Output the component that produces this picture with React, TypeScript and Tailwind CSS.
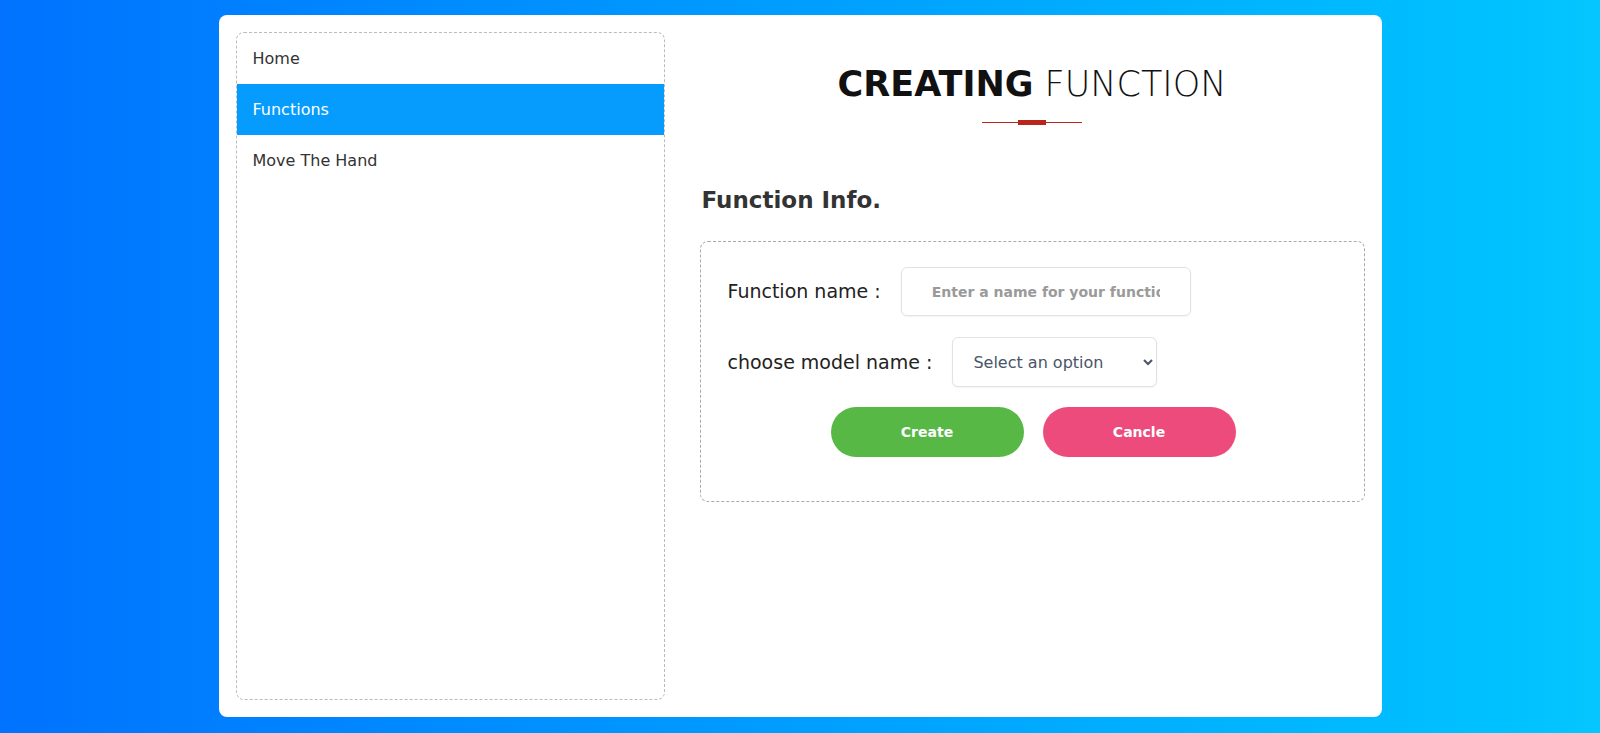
export default function App() {
  const menu = ["Home", "Functions", "Move The Hand"];
  const active = "Functions";

  return (
    <div
      className="min-h-screen w-full bg-gradient-to-r from-[#0072ff] to-[#06c6ff] flex justify-center pt-[15px]"
      style={{ fontFamily: "'DejaVu Sans', 'Noto Sans', sans-serif" }}
    >
      <div className="w-[1163px] h-[702px] bg-white rounded-lg p-[17px] flex">
        {/* Sidebar */}
        <aside className="w-[429px] h-full border border-dashed border-[#bbbbbb] rounded-lg overflow-hidden">
          {menu.map((item) => (
            <div
              key={item}
              className={`h-[51px] flex items-center pl-4 text-[16px] ${
                item === active ? "bg-[#069cfd] text-white" : "text-[#333333]"
              }`}
            >
              {item}
            </div>
          ))}
        </aside>

        {/* Content */}
        <section className="flex-1 ml-[35px] flex flex-col">
          <h1 className="text-center text-[35px] leading-[42px] mt-[31px] text-[#111111]">
            <span className="font-semibold">CREATING</span>{" "}
            <span className="font-light">FUNCTION</span>
          </h1>
          <div className="flex justify-center items-center mt-[15px]">
            <div className="w-[36px] h-px bg-[#b8261c]" />
            <div className="w-[28px] h-[5px] bg-[#b8261c]" />
            <div className="w-[36px] h-px bg-[#b8261c]" />
          </div>

          <h2 className="mt-[61px] pl-[2px] text-[23px] font-bold text-[#333333] leading-[28px]">
            Function Info.
          </h2>

          <div className="mt-[27px] border border-dashed border-[#aaaaaa] rounded-lg pl-[27px] pr-[25px] pt-[25px] pb-[44px]">
            <div className="flex items-center gap-5">
              <label className="text-[19px] text-[#222222]">Function name :</label>
              <input
                type="text"
                placeholder="Enter a name for your function"
                className="w-[290px] h-[49px] border border-[#e2e2e2] rounded-md pl-[30px] pr-[30px] text-[14px] font-bold placeholder:text-[#9a9a9a] outline-none shadow-[0_1px_2px_rgba(0,0,0,0.05)]"
              />
            </div>
            <div className="flex items-center gap-5 mt-[21px]">
              <label className="text-[19px] text-[#222222]">choose model name :</label>
              <select
                defaultValue=""
                className="w-[205px] h-[50px] border border-[#e2e2e2] rounded-md pl-4 pr-2 text-[16px] text-[#4a5568] bg-white outline-none shadow-[0_1px_2px_rgba(0,0,0,0.05)]"
              >
                <option value="">Select an option</option>
              </select>
            </div>
            <div className="flex justify-center gap-[19px] mt-[20px]">
              <button className="w-[193px] h-[50px] rounded-full bg-[#57b846] text-white text-[14px] font-bold">
                Create
              </button>
              <button className="w-[193px] h-[50px] rounded-full bg-[#ec4b7c] text-white text-[14px] font-bold">
                Cancle
              </button>
            </div>
          </div>
        </section>
      </div>
    </div>
  );
}
